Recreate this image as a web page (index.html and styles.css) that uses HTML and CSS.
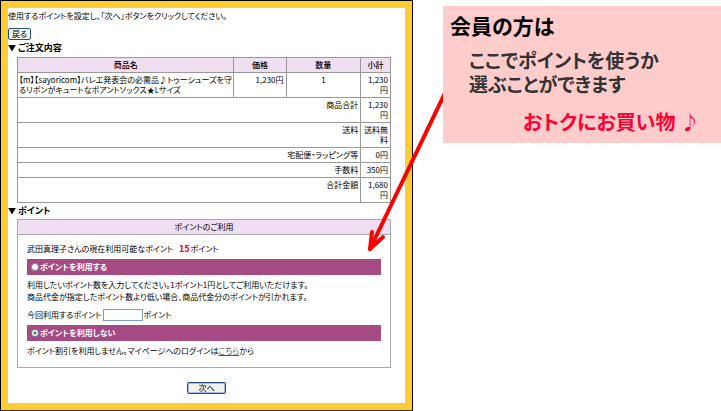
FILE: index.html
```html
<!DOCTYPE html>
<html lang="ja">

<head>
  <meta charset="UTF-8" />
  <meta name="viewport" content="width=device-width, initial-scale=1" />
  <title>ポイントのご利用</title>
  <link rel="stylesheet" href="styles.css">
</head>

<body>
  <div class="guide">
    <form class="screen">
      <p class="lead">使用するポイントを設定し、「次へ」ボタンをクリックしてください。</p>
      <button type="button" class="btn-back">戻る</button>

      <h2><span class="mark">▼</span>ご注文内容</h2>
      <table class="order">
        <colgroup>
          <col class="col-name" />
          <col class="col-price" />
          <col class="col-count" />
          <col class="col-sum" />
        </colgroup>
        <thead>
          <tr><th>商品名</th><th>価格</th><th>数量</th><th>小計</th></tr>
        </thead>
        <tbody>
          <tr>
            <td class="name">【m】【sayoricom】バレエ発表会の必需品♪トゥーシューズを守<br />るリボンがキュートなポアントソックス★Lサイズ</td>
            <td>1,230円</td>
            <td class="count">1</td>
            <td>1,230円</td>
          </tr>
          <tr><td colspan="3">商品合計</td><td>1,230円</td></tr>
          <tr><td colspan="3">送料</td><td>送料無料</td></tr>
          <tr><td colspan="3">宅配便・ラッピング等</td><td>0円</td></tr>
          <tr><td colspan="3">手数料</td><td>350円</td></tr>
          <tr><td colspan="3">合計金額</td><td>1,680円</td></tr>
        </tbody>
      </table>

      <h2><span class="mark">▼</span>ポイント</h2>
      <section class="point">
        <h3>ポイントのご利用</h3>
        <div class="point-body">
          <p class="balance">武田真理子さんの現在利用可能なポイント <strong>15</strong>ポイント</p>

          <label class="choice"><input type="radio" name="point" />ポイントを利用する</label>
          <p class="note">利用したいポイント数を入力してください。1ポイント1円としてご利用いただけます。<br />商品代金が指定したポイント数より低い場合、商品代金分のポイントが引かれます。</p>
          <div class="amount">
            <label for="use-point">今回利用するポイント</label>
            <input type="text" id="use-point" />
            <span>ポイント</span>
          </div>

          <label class="choice"><input type="radio" name="point" checked />ポイントを利用しない</label>
          <p class="login">ポイント割引を利用しません。マイページへのログインは<a href="#">こちら</a>から</p>
        </div>
      </section>

      <button type="button" class="btn-next">次へ</button>
    </form>

    <aside class="callout">
      <h1>会員の方は</h1>
      <p class="message">ここでポイントを使うか<br />選ぶことができます</p>
      <p class="catch">おトクにお買い物 ♪</p>
      <svg class="arrow" width="80" height="250" viewBox="0 0 80 250" aria-hidden="true">
        <path d="M82 87 L7 243" />
        <path d="M9 226 L7 243 L20 231" />
      </svg>
    </aside>
  </div>
</body>

</html>
```

FILE: styles.css
```css
* { margin: 0; padding: 0; box-sizing: border-box; }
body {
  font-family: "Noto Sans CJK JP", sans-serif;
  font-size: 8px; line-height: 12px;
  font-feature-settings: "palt";
  background: white; color: #000;
}
button, input { font: inherit; font-feature-settings: inherit; color: inherit; }
.guide {
  display: grid; grid-template-columns: 413fr 278fr; gap: 30px;
  align-items: start;
}

/* 注文画面 */
.screen {
  min-width: 0; border: 1px solid #000; border-bottom: 2px solid #3a2c0c;
  box-shadow: inset 0 0 0 7px #ffcc33;
  padding: 9px 7px 16px;
}
.lead { white-space: nowrap; }
.btn-back {
  display: block; height: 12px; margin-top: 6px; padding: 0 3px;
  line-height: 10px; background: #f4f4ee;
  border: 1px solid #1c5180; border-radius: 2px;
}
h2 {
  display: flex; gap: 3px; margin-top: 1px;
  font-size: 9px; line-height: 14px;
}
.mark { width: 7px; font-size: 8px; }
.order {
  width: calc(100% - 23px); margin: 2px 14px 0 9px;
  table-layout: fixed; border-collapse: collapse;
  line-height: 10px;
}
.col-name { width: 58%; }
.col-price { width: 14%; }
.col-count { width: 20%; }
.col-sum { width: 8%; }
.order th, .order td {
  border: 1px solid #999; padding: 2px; vertical-align: top;
}
.order th { background: #f0def2; font-weight: 500; }
.order td { text-align: right; word-break: break-all; }
.order td.name { padding: 2px 1px; text-align: left; white-space: nowrap; }
.order td.count { text-align: center; }

/* ポイント */
.point { margin: 1px 14px 0 9px; border: 1px solid #aaa; }
.point h3 {
  background: #f0def2; border-bottom: 1px solid #aaa;
  font-size: 8px; font-weight: 400; line-height: 14px; text-align: center;
}
.point-body { padding: 8px 9px 10px; }
.balance strong { margin: 0 1px 0 4px; font-size: 9px; color: #f00; }
.choice {
  display: flex; align-items: center; gap: 1px;
  height: 16px; margin-top: 4px; padding-left: 4px;
  background: #a54a82; color: white; font-weight: 700;
}
.choice input {
  appearance: none; width: 8px; height: 8px;
  background: white; border: 1px solid #7590a8; border-radius: 50%;
}
.choice input:checked {
  background: radial-gradient(circle, #21a121 0 1px, white 2px);
}
.note { margin-top: 4px; }
.amount { display: flex; align-items: center; margin-top: 6px; }
.amount input {
  width: 40px; height: 12px; margin-left: 2px;
  background: white; border: 1px solid #7f9db9;
}
.login { margin-top: 4px; }
.login a { color: #555; }
.btn-next {
  display: block; width: 39px; height: 12px; margin: 14px auto 0;
  line-height: 8px; background: #f1f1ea;
  border: 1px solid #1c5180; border-radius: 2px;
  box-shadow: inset 0 0 0 1px #9ebbe8;
}

/* 吹き出し */
.callout {
  position: relative; margin-top: 6px; padding: 7px;
  background: #ffcccc; white-space: nowrap;
}
.callout h1 { font-size: 21px; font-weight: 700; line-height: 25px; color: #000; }
.message {
  margin: 10px 0 0 19px;
  font-size: 19px; font-weight: 700; line-height: 24px; color: #333;
}
.catch {
  margin: 12px 14px 0 0; text-align: right;
  font-size: 20px; font-weight: 700; line-height: 28px; color: #ff0033;
}
.arrow { position: absolute; top: 0; right: 100%; }
.arrow path {
  fill: none; stroke: #f00; stroke-width: 4;
  stroke-linecap: round; stroke-linejoin: round;
}
```
